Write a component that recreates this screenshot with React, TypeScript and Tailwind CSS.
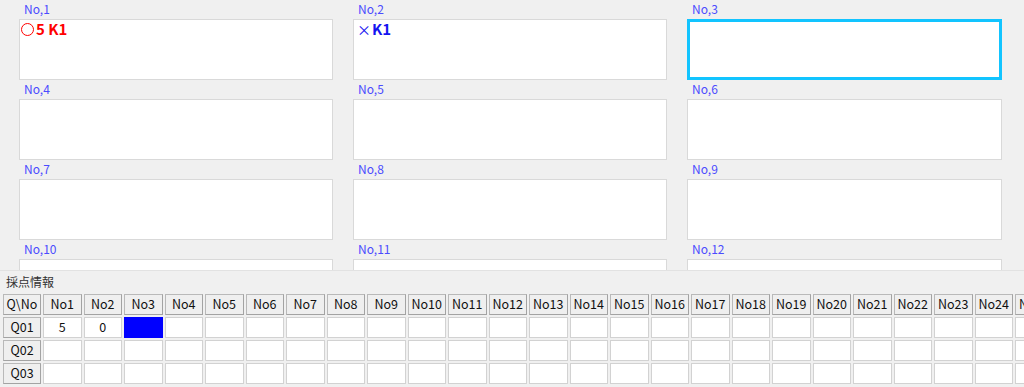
const panels = Array.from({ length: 12 }, (_, i) => i + 1);
const cols = Array.from({ length: 25 }, (_, i) => `No${i + 1}`);
const rows = ["Q01", "Q02", "Q03"];

function Panel({ n }: { n: number }) {
  const active = n === 3;
  return (
    <div className="flex flex-col">
      <div className="h-[19px] pl-[5px] pt-[1px] text-[12px] leading-[15px] text-[#4b4bff]">No,{n}</div>
      <div
        className={
          "h-[61px] bg-white " +
          (active ? "border-[3px] border-[#12c4ff]" : "border border-[#d9d9d9]")
        }
      >
        {n === 1 && (
          <div className="pl-[1px] pt-[1px] text-[15px] font-semibold leading-[16px] text-[#ff0000] flex items-center">
            <span className="inline-block w-[13px] h-[13px] rounded-full border-[1.5px] border-[#ff0000] mr-[2px]" />
            <span>5 K1</span>
          </div>
        )}
        {n === 2 && (
          <div className="pl-[3px] pt-[1px] text-[15px] font-semibold leading-[16px] text-[#1414f0]">
            <span className="font-normal text-[14px] mr-[1px]">×</span>K1
          </div>
        )}
      </div>
    </div>
  );
}

function HeadCell({ label, w }: { label: string; w: string }) {
  return (
    <div className={"shrink-0 h-[23px] p-px " + w}>
      <div className="h-full border border-[#b9b9b9] border-b-[#a3a3a3] border-r-[#a3a3a3] bg-[#efefef] flex items-center justify-center text-[12.5px] text-[#111]">
        {label}
      </div>
    </div>
  );
}

function DataCell({ value, blue }: { value?: string; blue?: boolean }) {
  return (
    <div className="shrink-0 w-[40.5px] h-[23px] p-px">
      <div
        className={
          "h-full flex items-center justify-center text-[12.5px] text-[#111] " +
          (blue ? "bg-[#0000ff]" : "bg-white border border-[#d2d2d2]")
        }
      >
        {value}
      </div>
    </div>
  );
}

export default function App() {
  return (
    <div className="w-[1024px] h-[387px] overflow-hidden bg-[#f0f0f0] font-['Noto_Sans_CJK_JP','Noto_Sans',sans-serif]">
      <div className="h-[270px] overflow-hidden pl-[19px]">
        <div className="grid grid-cols-[314px_314px_315px] gap-x-[20px]">
          {panels.map((n) => (
            <Panel key={n} n={n} />
          ))}
        </div>
      </div>
      <div className="border-t border-[#e2e2e2] h-[117px] overflow-hidden">
        <div className="h-[22px] pl-[6px] pt-[4px] text-[12px] leading-[14px] text-[#333]">採点情報</div>
        <div className="pl-[2px] flex flex-col">
          <div className="flex">
            <HeadCell label="Q\No" w="w-[40px]" />
            {cols.map((c) => (
              <HeadCell key={c} label={c} w="w-[40.5px]" />
            ))}
          </div>
          {rows.map((r, ri) => (
            <div key={r} className="flex">
              <HeadCell label={r} w="w-[40px]" />
              {cols.map((c, ci) => (
                <DataCell
                  key={c}
                  value={ri === 0 && ci === 0 ? "5" : ri === 0 && ci === 1 ? "0" : undefined}
                  blue={ri === 0 && ci === 2}
                />
              ))}
            </div>
          ))}
        </div>
      </div>
    </div>
  );
}
